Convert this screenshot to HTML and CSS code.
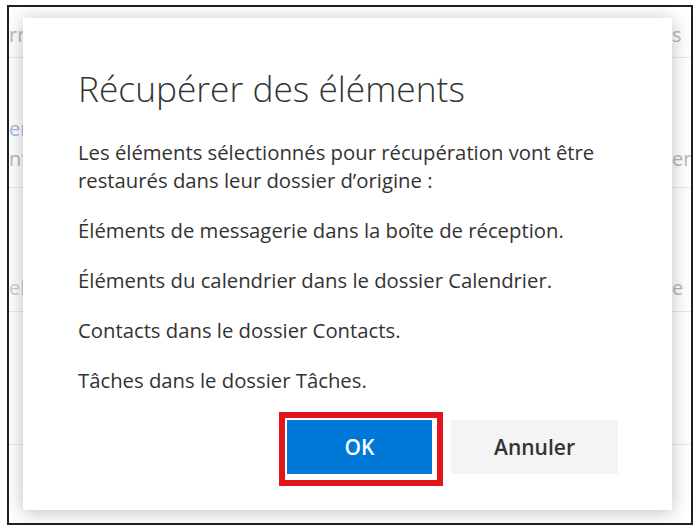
FILE: index.html
```html
<!DOCTYPE html>
<html lang="fr">
<head>
    <meta charset="UTF-8">
    <title>Récupérer des éléments</title>
    <link rel="stylesheet" href="styles.css">
</head>
<body>
    <div class="frame">
        <!-- liste en arrière-plan, masquée par la boîte de dialogue -->
        <div class="page">
            <div class="row row-1">
                <div class="line"><span class="frag">rrrrr</span><span class="frag frag-right">s</span></div>
            </div>
            <div class="row row-2">
                <div class="line"><span class="frag frag-link">errr</span><span class="frag frag-right"></span></div>
                <div class="line"><span class="frag">ntrr</span><span class="frag frag-right">er</span></div>
            </div>
            <div class="row row-3">
                <div class="line"><span class="frag frag-faint">el</span><span class="frag frag-right">e</span></div>
            </div>
            <div class="row row-4"></div>
        </div>

        <div class="dialog">
            <h1 class="dialog-title">Récupérer des éléments</h1>
            <div class="dialog-body">
                <p>Les éléments sélectionnés pour récupération vont être restaurés dans leur dossier d’origine :</p>
                <p>Éléments de messagerie dans la boîte de réception.</p>
                <p>Éléments du calendrier dans le dossier Calendrier.</p>
                <p>Contacts dans le dossier Contacts.</p>
                <p>Tâches dans le dossier Tâches.</p>
            </div>
            <div class="dialog-actions">
                <div class="highlight">
                    <button class="btn btn-primary">OK</button>
                </div>
                <button class="btn btn-secondary">Annuler</button>
            </div>
        </div>
    </div>
</body>
</html>
```

FILE: styles.css
```css
:root {
    --text-color: #333;
    --primary: #0078d7;
    --frag-color: #b9b9b9;
    --line-color: #e9e9e9;
}

body {
    margin: 0;
    background: #fff;
    font-family: 'Open Sans', 'Noto Sans', sans-serif;
    color: var(--text-color);
}

.frame {
    position: relative;
    box-sizing: border-box;
    width: 686px;
    height: 520px;
    margin: 5px 0 0 7px;
    border: 2px solid #1f1f1f;
    overflow: hidden;
    background: #fff;
}

/* arrière-plan */
.page {
    display: flex;
    flex-direction: column;
}

.row {
    box-sizing: border-box;
    border-bottom: 1px solid var(--line-color);
}

.row-1 { height: 51px; padding-top: 16px; }
.row-2 { height: 130px; padding-top: 59px; }
.row-3 { height: 124px; padding-top: 88px; }
.row-4 { height: 133px; }

.line {
    display: flex;
    justify-content: space-between;
    height: 24px;
    margin-bottom: 6px;
    font-size: 20px;
    line-height: 24px;
}

.frag {
    color: var(--frag-color);
    white-space: nowrap;
}

.frag-link {
    color: #a3bde3;
}

.frag-faint {
    color: #d0d0d0;
}

.frag-right {
    width: 19px;
    padding-left: 1px;
}

/* boîte de dialogue */
.dialog {
    position: absolute;
    left: 14px;
    top: 11px;
    width: 649px;
    height: 492px;
    box-sizing: border-box;
    padding: 48px 54px 0 55px;
    background: #fff;
    box-shadow: 0 2px 18px rgba(0, 0, 0, 0.26);
    display: flex;
    flex-direction: column;
}

.dialog-title {
    margin: 0;
    font-size: 35.3px;
    font-weight: 300;
    line-height: 44px;
    color: var(--text-color);
}

.dialog-body {
    margin-top: 28px;
    font-size: 20.3px;
    line-height: 28px;
}

.dialog-body p {
    margin: 0 0 22px;
}

.dialog-body p:last-child {
    margin-bottom: 0;
}

.dialog-actions {
    display: flex;
    justify-content: flex-end;
    align-items: flex-start;
    gap: 8px;
    margin-top: 18px;
}

.highlight {
    border: 6px solid #e3151c;
    padding: 2px 5px 6px 2px;
}

.btn {
    display: block;
    height: 54px;
    border: none;
    font-family: inherit;
    font-size: 21px;
    font-weight: 600;
    cursor: pointer;
}

.btn-primary {
    width: 145px;
    background: var(--primary);
    color: #fff;
}

.btn-secondary {
    width: 167px;
    margin-top: 8px;
    background: #f4f4f4;
    color: var(--text-color);
}
```
